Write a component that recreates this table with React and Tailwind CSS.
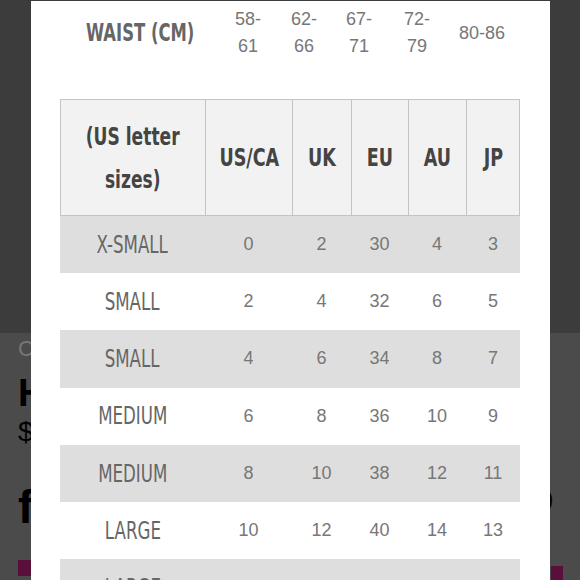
import React from "react";

const narrow = "font-['DejaVu_Sans_Condensed','DejaVu_Sans',sans-serif]";
const arial = "font-['Liberation_Sans',Arial,sans-serif]";

const waist = [
  { lines: ["58-", "61"], w: "w-[56px]" },
  { lines: ["62-", "66"], w: "w-[56px]" },
  { lines: ["67-", "71"], w: "w-[54px]" },
  { lines: ["72-", "79"], w: "w-[62px]" },
  { lines: ["80-86"], w: "w-[68px]" },
];

const rows = [
  ["X-SMALL", "0", "2", "30", "4", "3"],
  ["SMALL", "2", "4", "32", "6", "5"],
  ["SMALL", "4", "6", "34", "8", "7"],
  ["MEDIUM", "6", "8", "36", "10", "9"],
  ["MEDIUM", "8", "10", "38", "12", "11"],
  ["LARGE", "10", "12", "40", "14", "13"],
  ["LARGE", "12", "14", "42", "16", "15"],
];

const cols = "grid grid-cols-[145px_87px_59px_57px_58px_54px]";

function Squeeze({ children, k = "scale-x-[0.74]" }) {
  return <span className={`inline-block whitespace-nowrap ${k}`}>{children}</span>;
}

export default function App() {
  return (
    <div className="relative w-[580px] h-[580px] overflow-hidden bg-[#4b4b4b]">
      {/* page behind the overlay */}
      <div className="flex flex-col">
        <div className="h-[333px] bg-[#3c3c3c]"></div>
        <div className="relative h-[247px] pl-[18px]">
          <div className={`${arial} text-[22px] font-light text-[#777] leading-none mt-[5px]`}>C</div>
          <div className={`${arial} text-[38px] font-bold text-black leading-none mt-[14px]`}>H</div>
          <div className={`${arial} text-[28px] text-black leading-none mt-[6px]`}>$</div>
          <div className={`${arial} text-[46px] font-bold text-black leading-none mt-[38px]`}>f</div>
          <div className="w-[14px] h-[16px] bg-[#5a0f3a] mt-[30px]"></div>
          <div className={`${arial} absolute left-[546px] top-[155px] text-[22px] text-black leading-none`}>)</div>
          <div className="absolute left-[551px] top-[233px] w-[12px] h-[16px] bg-[#5a0f3a]"></div>
        </div>
      </div>

      {/* modal */}
      <div className="absolute left-[31px] top-[1px] w-[519px] bottom-0 bg-white overflow-hidden">
        <div className="flex items-center h-[64px] pl-[29px]">
          <div className={`${narrow} w-[160px] text-center text-[24px] font-bold text-[#666]`}>
            <Squeeze k="scale-x-[0.76]">WAIST (CM)</Squeeze>
          </div>
          {waist.map((c, i) => (
            <div key={i} className={`${arial} ${c.w} text-center text-[18px] leading-[27px] text-[#777]`}>
              {c.lines.map((l) => (
                <div key={l}>{l}</div>
              ))}
            </div>
          ))}
        </div>

        <div className="ml-[29px] mt-[34px] w-[460px]">
          <div className={`${cols} h-[117px] bg-[#f2f2f2] text-[#444] ${narrow} font-bold text-[25px]`}>
            <div className="flex items-center justify-center text-center leading-[43px] border-l border-y border-[#c4c4c4]">
              <span className="inline-block scale-x-[0.76]">(US letter<br />sizes)</span>
            </div>
            {["US/CA", "UK", "EU", "AU"].map((h) => (
              <div key={h} className="flex items-center justify-center border-l border-y border-[#c4c4c4]">
                <Squeeze k="scale-x-[0.78]">{h}</Squeeze>
              </div>
            ))}
            <div className="flex items-center justify-center border-x border-y border-[#c4c4c4]">
              <Squeeze k="scale-x-[0.78]">JP</Squeeze>
            </div>
          </div>

          {rows.map((r, i) => (
            <div key={i} className={`${cols} h-[57.2px] items-center ${i % 2 === 0 ? "bg-[#dedede]" : "bg-white"}`}>
              <div className={`${narrow} text-center text-[25px] text-[#666]`}>
                <Squeeze>{r[0]}</Squeeze>
              </div>
              {r.slice(1).map((v, j) => (
                <div key={j} className={`${arial} text-center text-[18px] text-[#777]`}>{v}</div>
              ))}
            </div>
          ))}
        </div>
      </div>
    </div>
  );
}
